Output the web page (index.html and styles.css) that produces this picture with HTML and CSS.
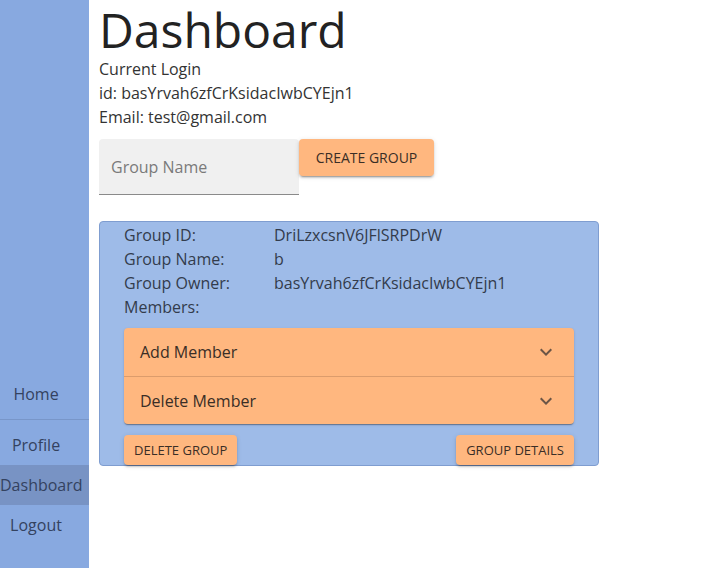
FILE: index.html
```html
<!DOCTYPE html>
<html>
<head>
<meta charset="utf-8">
<link rel="stylesheet" href="styles.css">
</head>
<body>
<div class="app">
  <nav class="sidebar">
    <a class="nav-item">Home</a>
    <div class="nav-divider"></div>
    <a class="nav-item">Profile</a>
    <a class="nav-item active">Dashboard</a>
    <a class="nav-item">Logout</a>
  </nav>
  <main class="main">
    <h1 class="title">Dashboard</h1>
    <div class="info">
      <div class="line">Current Login</div>
      <div class="line">id: basYrvah6zfCrKsidacIwbCYEjn1</div>
      <div class="line">Email: test@gmail.com</div>
    </div>
    <div class="create-row">
      <div class="field"><span class="placeholder">Group Name</span></div>
      <button class="btn btn-create">CREATE GROUP</button>
    </div>
    <section class="card">
      <div class="row"><span class="label">Group ID:</span><span class="value">DriLzxcsnV6JFlSRPDrW</span></div>
      <div class="row"><span class="label">Group Name:</span><span class="value">b</span></div>
      <div class="row"><span class="label">Group Owner:</span><span class="value">basYrvah6zfCrKsidacIwbCYEjn1</span></div>
      <div class="row"><span class="label">Members:</span></div>
      <div class="accordion">
        <div class="acc-item">
          <span>Add Member</span>
          <svg class="chev" viewBox="0 0 24 24" width="24" height="24"><path d="M16.59 8.59L12 13.17 7.41 8.59 6 10l6 6 6-6z"/></svg>
        </div>
        <div class="acc-item">
          <span>Delete Member</span>
          <svg class="chev" viewBox="0 0 24 24" width="24" height="24"><path d="M16.59 8.59L12 13.17 7.41 8.59 6 10l6 6 6-6z"/></svg>
        </div>
      </div>
      <div class="card-actions">
        <button class="btn btn-small">DELETE GROUP</button>
        <button class="btn btn-small">GROUP DETAILS</button>
      </div>
    </section>
  </main>
</div>
</body>
</html>
```
FILE: styles.css
```css
* { box-sizing: border-box; }
html, body { margin: 0; padding: 0; }
body {
  font-family: "Open Sans", "Noto Sans", sans-serif;
  color: #2b2b2b;
  background: #fff;
}
.app {
  display: flex;
  height: 568px;
}
.sidebar {
  width: 89px;
  flex: none;
  background: #88a9e0;
  display: flex;
  flex-direction: column;
  justify-content: flex-end;
  padding-bottom: 23px;
}
.nav-item {
  display: block;
  height: 40px;
  line-height: 40px;
  padding-right: 17px;
  text-align: center;
  white-space: nowrap;
  font-size: 16px;
  color: #34425f;
}
.nav-item.active {
  background: #7893c4;
}
.nav-divider {
  height: 1px;
  background: #7896c9;
  margin: 5px 0 5px;
}
.main {
  padding-left: 10px;
  flex: 1;
}
.title {
  margin: 0;
  height: 57px;
  font-size: 48px;
  font-weight: 400;
  line-height: 60px;
  color: #222;
  overflow: visible;
}
.info .line {
  height: 24px;
  line-height: 24px;
  font-size: 16px;
  color: #333;
}
.create-row {
  display: flex;
  align-items: flex-start;
  margin-top: 10px;
}
.field {
  width: 200px;
  height: 56px;
  background: #f0f0f0;
  border-bottom: 1px solid #8a8a8a;
  border-radius: 4px 4px 0 0;
  display: flex;
  align-items: center;
  padding-left: 12px;
}
.placeholder {
  color: #7a7a7a;
  font-size: 16px;
}
.btn {
  border: none;
  background: #ffb77f;
  color: #3a2e26;
  font-family: inherit;
  border-radius: 4px;
  box-shadow: 0 3px 1px -2px rgba(0,0,0,0.2), 0 2px 2px 0 rgba(0,0,0,0.14), 0 1px 5px 0 rgba(0,0,0,0.12);
  cursor: pointer;
}
.btn-create {
  width: 135px;
  height: 37px;
  font-size: 14px;
}
.card {
  margin-top: 26px;
  width: 500px;
  background: #9ebbe8;
  border: 1px solid #7f9dd0;
  border-radius: 4px;
  padding: 1px 24px 0 24px;
}
.row {
  display: flex;
  height: 24px;
  line-height: 24px;
  font-size: 16px;
  color: #333c4c;
}
.label { width: 150px; flex: none; }
.accordion {
  margin-top: 9px;
  border-radius: 4px;
  box-shadow: 0 2px 1px -1px rgba(0,0,0,0.2), 0 1px 1px 0 rgba(0,0,0,0.14), 0 1px 3px 0 rgba(0,0,0,0.12);
  background: #ffb77f;
}
.acc-item {
  height: 48px;
  display: flex;
  align-items: center;
  justify-content: space-between;
  padding: 0 16px;
  font-size: 16px;
  color: #3a2e26;
}
.acc-item + .acc-item {
  border-top: 1px solid #dc9c6c;
}
.chev { fill: #6b5546; }
.card-actions {
  display: flex;
  justify-content: space-between;
  margin-top: 11px;
}
.btn-small {
  height: 30px;
  font-size: 13px;
  padding: 0 10px;
}
```
